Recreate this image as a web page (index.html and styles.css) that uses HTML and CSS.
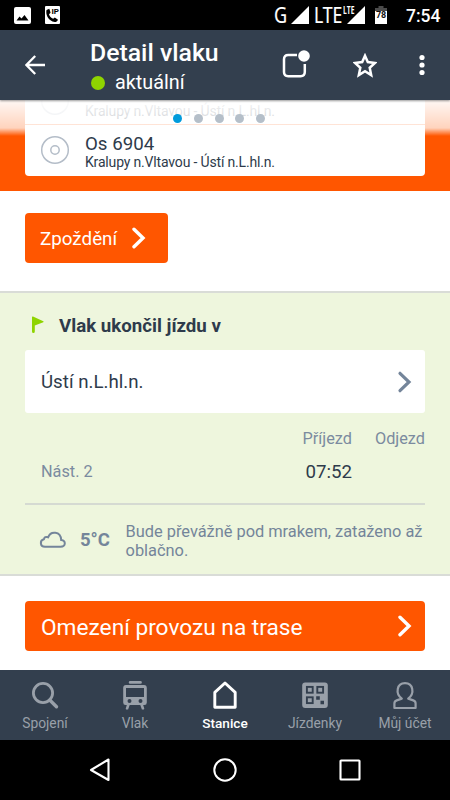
FILE: index.html
```html
<!DOCTYPE html>
<html lang="cs">
<head>
<meta charset="utf-8">
<meta name="viewport" content="width=device-width, initial-scale=1">
<title>Detail vlaku</title>
<link rel="stylesheet" href="styles.css">
</head>
<body>
<div class="screen">
  <div class="status">
    <svg class="status-image" width="17" height="17" viewBox="0 0 17 17"><rect width="17" height="17" rx="2" fill="#fff"/><path d="M2.5 13.5L5.5 9.5L7.5 11.5L10.5 8L14.5 13.5Z"/></svg>
    <span class="ip-icon">
      <svg width="15" height="18" viewBox="0 0 15 18"><rect width="15" height="18" rx="1" fill="#fff"/><path d="M1.5 4L4.3 2.8L5.6 6.8L4 8.2C4.6 10.5 6 12 8.2 12.8L9.8 11.5L13 13.7C12 16 10 16.5 7.5 15.5C3 13.5 .5 8.5 1.5 4Z"/></svg>
      <b>IP</b>
    </span>
    <span class="spacer"></span>
    <span class="net net-g">G</span>
    <svg class="signal" width="18" height="18" viewBox="0 0 18 18"><path d="M18 0V18H0Z" fill="#fff"/></svg>
    <span class="net net-lte">LTE</span>
    <span class="lte-signal"><svg width="18" height="18" viewBox="0 0 18 18"><path d="M18 0V18H0Z" fill="#fff"/></svg><b>LTE</b></span>
    <span class="battery"><svg width="12" height="18" viewBox="0 0 12 18"><path d="M3.5 0H8.5V2H12V5H0V2H3.5Z" fill="#4b4b4b"/><path d="M0 5H12V18H0Z" fill="#fff"/></svg><b>78</b></span>
    <span class="clock">7:54</span>
  </div>

  <header class="appbar">
    <svg class="back" width="20" height="20" viewBox="0 0 20 20" fill="none" stroke="#fff" stroke-width="2.3"><path d="M20 10H1.6M10.2 1L1.4 10L10.2 19"/></svg>
    <div class="titles">
      <h1>Detail vlaku</h1>
      <div class="state"><i></i>aktuální</div>
    </div>
    <svg class="notify" width="28" height="28" viewBox="0 0 28 28"><path d="M15 5H6.2Q2 5 2 9.2V22Q2 26.2 6.2 26.2H18.6Q22.8 26.2 22.8 22V14" fill="none" stroke="#fff" stroke-width="2.5"/><circle cx="22" cy="6" r="5.8" fill="#fff"/></svg>
    <svg class="star" width="24" height="25" viewBox="0 0 24 25"><path d="M12 2.7L14.8 9L22 9.9L16.7 14.7L18.2 22.1L12 18.3L5.8 22.1L7.3 14.7L2 9.9L9.2 9Z" fill="none" stroke="#fff" stroke-width="2.5"/></svg>
    <svg class="more" width="6" height="22" viewBox="0 0 6 22" fill="#fff"><circle cx="3" cy="3.5" r="2.6"/><circle cx="3" cy="11" r="2.6"/><circle cx="3" cy="18.5" r="2.6"/></svg>
  </header>

  <main>
    <section class="hero">
      <div class="trains">
        <div class="train train-prev">
          <svg width="30" height="30" viewBox="0 0 30 30" fill="none" stroke="#b4bdc8" stroke-width="1.5"><circle cx="15" cy="15" r="13.3"/></svg>
          <div class="route">Kralupy n.Vltavou - Ústí n.L.hl.n.</div>
        </div>
        <div class="train">
          <svg width="30" height="30" viewBox="0 0 30 30" fill="none" stroke="#b4bdc8" stroke-width="1.5"><circle cx="15" cy="15" r="13.3"/><circle cx="15" cy="15" r="4.2"/></svg>
          <div><div class="number">Os 6904</div><div class="route">Kralupy n.Vltavou - Ústí n.L.hl.n.</div></div>
        </div>
      </div>
      <div class="fade"></div>
      <div class="dots"><i class="on"></i><i></i><i></i><i></i><i></i></div>
    </section>

    <section class="delay">
      <a class="button delay-button"><span>Zpoždění</span><svg width="16" height="22" viewBox="0 0 16 22"><path d="M3 2.3L12 11L3 19.7" fill="none" stroke="#fff" stroke-width="3.4" stroke-linecap="round"/></svg></a>
    </section>

    <section class="station">
      <h2><svg width="12" height="18" viewBox="0 0 12 18" fill="#8fd400"><path d="M0 1.3Q0 .2 1 .6L11.3 5.3Q12 5.8 11.3 6.2L2.8 9.5V15.5Q2.8 17 1.4 17T0 15.5Z"/></svg>Vlak ukončil jízdu v</h2>
      <a class="place"><span>Ústí n.L.hl.n.</span><svg width="16" height="22" viewBox="0 0 16 22"><path d="M3 2.3L12 11L3 19.7" fill="none" stroke="#74859a" stroke-width="3.2" stroke-linecap="round"/></svg></a>
      <div class="times">
        <span></span><span class="label">Příjezd</span><span class="label">Odjezd</span>
        <span class="platform">Nást. 2</span><span class="time">07:52</span><span></span>
      </div>
      <div class="weather">
        <svg width="28" height="18" viewBox="0 0 28 18"><path d="M6 15.8H21.5C27.2 15.6 27 9.6 22.2 9C21.7 -.2 11.4 -.2 9.2 6.2C6.6 5.3 5.4 6.5 4.9 8.2C.6 9.2 .8 15.7 6 15.8Z" fill="none" stroke="#74859a" stroke-width="2"/></svg>
        <b>5°C</b>
        <p>Bude převážně pod mrakem, zataženo až oblačno.</p>
      </div>
    </section>

    <section class="limits">
      <a class="button limits-button"><span>Omezení provozu na trase</span><svg width="16" height="22" viewBox="0 0 16 22"><path d="M3 2.3L12 11L3 19.7" fill="none" stroke="#fff" stroke-width="3.4" stroke-linecap="round"/></svg></a>
    </section>
  </main>

  <nav class="tabs">
    <a><svg width="30" height="30" viewBox="0 0 30 30" fill="none" stroke="#99a0a9"><circle cx="13" cy="13" r="9.6" stroke-width="2.8"/><path d="M19.7 20L26.5 26.8" stroke-width="3.4" stroke-linecap="round"/></svg><span>Spojení</span></a>
    <a><svg width="30" height="30" viewBox="0 0 30 30" fill="#99a0a9"><rect x="8.8" y="1" width="13" height="2.7" rx="1.3"/><path fill-rule="evenodd" d="M6 5H24Q26.8 5 26.8 8V22.5Q26.8 25 24.4 25H23.2L24.3 28.7Q24 29.8 22.6 29.5H21.9L20.3 25H9.7L8.1 29.5H7.4Q6 29.8 5.7 28.7L6.8 25H5.6Q3.2 25 3.2 22.5V8Q3.2 5 6 5ZM6 8V17H24V8ZM9.5 19A2 2 0 1 0 9.5 23A2 2 0 1 0 9.5 19ZM20.5 19A2 2 0 1 0 20.5 23A2 2 0 1 0 20.5 19Z"/></svg><span>Vlak</span></a>
    <a class="active"><svg width="30" height="30" viewBox="0 0 30 30" fill="none" stroke="#fff" stroke-width="2.9" stroke-linejoin="round"><path d="M15 3L25.2 12.4V27.2H4.8V12.4Z"/></svg><span>Stanice</span></a>
    <a><svg width="30" height="30" viewBox="0 0 30 30"><rect x="2.2" y="2.4" width="25.6" height="25.6" rx="3" fill="#99a0a9"/><g fill="none" stroke="#333f4e" stroke-width="1.9"><rect x="6.9" y="6.9" width="5.8" height="5.8"/><rect x="17.3" y="6.9" width="5.8" height="5.8"/><rect x="6.9" y="17.3" width="5.8" height="5.8"/></g><path d="M16.2 16.2H19.8V19.8H16.2ZM20.5 20.7H24V24.2H20.5Z" fill="#333f4e"/></svg><span>Jízdenky</span></a>
    <a><svg width="30" height="30" viewBox="0 0 30 30" fill="none" stroke="#99a0a9" stroke-width="2.2" stroke-linejoin="round"><path d="M11.8 18.6C5 13.5 6.8 3.2 15 3.2S25 13.5 18.2 18.6L23.3 20.4Q25.6 21.2 25.6 23.5V28H4.4V23.5Q4.4 21.2 6.7 20.4Z"/></svg><span>Můj účet</span></a>
  </nav>

  <div class="sysnav">
    <svg width="24" height="26" viewBox="0 0 24 26"><path d="M20.5 2.5V23L3 13Z" fill="none" stroke="#fff" stroke-width="2.1" stroke-linejoin="round"/></svg>
    <svg width="26" height="26" viewBox="0 0 26 26"><circle cx="13" cy="13" r="10.7" fill="none" stroke="#fff" stroke-width="2"/></svg>
    <svg width="26" height="26" viewBox="0 0 26 26"><rect x="3.5" y="3.5" width="19" height="19" rx=".6" fill="none" stroke="#fff" stroke-width="2.1"/></svg>
  </div>
</div>
</body>
</html>
```

FILE: styles.css
```css
* { box-sizing: border-box; }
body { margin: 0; font-family: Roboto, "Liberation Sans", sans-serif; color: #2e3b4b; background: #000; }
h1, h2, p { margin: 0; }
svg { display: block; flex: none; }
.screen { width: 450px; height: 800px; display: flex; flex-direction: column; overflow: hidden; }

.status { height: 30px; flex: none; display: flex; align-items: center; padding: 0 10px 0 14px; background: #000; color: #fff; white-space: nowrap; }
.ip-icon, .lte-signal, .battery { position: relative; flex: none; }
.ip-icon { margin-left: 14px; }
.ip-icon b { position: absolute; right: 1px; top: 2px; color: #000; font-size: 8px; line-height: 8px; }
.spacer { flex: 1; }
.net { font-family: "Noto Sans", sans-serif; font-size: 22.5px; line-height: 30px; padding-bottom: 1px; -webkit-text-stroke: .2px #fff; }
.net-g { width: 17px; transform: scaleX(.8); transform-origin: left; }
.net-lte { width: 28px; margin-left: 5px; transform: scaleX(.78); transform-origin: left; }
.lte-signal { margin-left: 5px; }
.lte-signal b { position: absolute; left: -4px; top: -1px; font: 700 10.5px/10px "Open Sans", sans-serif; transform: scaleX(.64); transform-origin: left; }
.battery { margin-left: 10px; }
.battery b { position: absolute; left: 1px; top: 5px; color: #111; font-size: 9px; line-height: 9px; letter-spacing: -.2px; }
.clock { width: 34px; margin-left: 19px; padding-top: 1px; font-size: 17.5px; font-weight: 500; line-height: 30px; }

.appbar { height: 70px; flex: none; display: flex; align-items: center; padding: 0 24px 0 25px; background: #333f4e; color: #fff; position: relative; z-index: 1; box-shadow: 0 1px 2px rgba(0,0,0,.4); }
.titles { flex: 1; margin-left: 45px; padding-top: 6px; }
.titles h1 { font-size: 24.8px; line-height: 30px; font-weight: 500; }
.state { display: flex; align-items: center; font-size: 19.8px; line-height: 30px; }
.state i { width: 14px; height: 14px; margin: 0 10px 0 1px; border-radius: 50%; background: #8fd400; }
.notify { margin-right: 43px; margin-top: -3px; }
.star { margin-right: 42px; }
.more { margin-right: 1px; }

main { height: 570px; flex: none; overflow: hidden; background: #fff; }
.hero { position: relative; height: 91px; padding: 0 25px; background: #ff5600; overflow: hidden; }
.trains { height: 75.5px; background: #fff; border-radius: 0 0 4px 4px; overflow: hidden; display: flex; flex-direction: column; justify-content: flex-end; }
.train { height: 51px; flex: none; display: flex; align-items: center; gap: 15px; padding-left: 15px; }
.train-prev { border-bottom: 1px solid #ff8a50; align-items: flex-end; padding-bottom: 5px; }
.train-prev svg { margin-bottom: 3px; }
.number { font-size: 18.7px; line-height: 20px; padding-top: 3px; }
.route { font-size: 14px; line-height: 16px; letter-spacing: -.17px; white-space: nowrap; }
.fade { position: absolute; left: 0; right: 0; top: 0; height: 36px; background: linear-gradient(rgba(255,255,255,.96), rgba(255,255,255,.74) 28px, rgba(255,255,255,0)); }
.dots { position: absolute; top: 14px; left: 0; right: 12px; display: flex; justify-content: center; gap: 11.6px; }
.dots i { width: 9px; height: 9px; border-radius: 50%; background: #b5bfc9; }
.dots .on { background: #009bdc; }

.button { display: flex; align-items: center; background: #ff5600; color: #fff; border-radius: 4px; white-space: nowrap; }
.delay { height: 100px; padding: 22px 25px 0; }
.delay-button { width: 142.5px; height: 50px; padding: 0 15px; justify-content: space-between; font-size: 18.8px; }
.delay-button svg { margin-right: 6px; }
.delay-button span { padding-top: 1px; }

.station { height: 285px; padding: 0 25px; background: #eef6dd; border-top: 2px solid #d9dcd7; border-bottom: 2px solid #d9dcd7; }
.station h2 { height: 57px; padding: 8px 0 0 7px; display: flex; align-items: center; gap: 15px; font-size: 18.7px; font-weight: 700; }
.station h2 svg { margin-top: -2px; }
.place { height: 62.5px; padding: 1px 12px 0 16px; display: flex; align-items: center; justify-content: space-between; background: #fff; border-radius: 3px; font-size: 18.7px; }
.times { display: grid; grid-template-columns: 1fr 75px 73px; grid-template-rows: 31px 35px; align-items: center; text-align: right; padding-top: 10.5px; height: 92.5px; border-bottom: 2px solid #d5dad2; align-content: start; }
.label { font-size: 16.3px; color: #7b8b9f; }
.platform { text-align: left; padding-left: 16px; font-size: 16.3px; color: #7b8b9f; }
.time { font-size: 18.7px; }
.weather { height: 69px; padding: 3px 0 0 14px; display: flex; align-items: center; color: #74859a; }
.weather svg { margin-top: -3px; }
.weather b { width: 46px; margin: -2px 0 0 13px; font-size: 18.5px; }
.weather p { width: 302px; font-size: 16.4px; line-height: 19px; letter-spacing: -.02px; }

.limits { height: 94px; padding: 25px 25px 0; }
.limits-button { height: 50px; padding: 2px 12px 0 16px; justify-content: space-between; font-size: 22.7px; }
.limits-button svg { margin-top: -2px; }

.tabs { height: 70px; flex: none; display: grid; grid-template-columns: repeat(5, 90px); background: #333f4e; color: #99a0a9; font-size: 13.8px; }
.tabs a { display: flex; flex-direction: column; align-items: center; padding-top: 10px; }
.tabs span { line-height: 18px; margin-top: 4px; }
.tabs .active { color: #fff; font-weight: 500; font-size: 13.6px; }
.sysnav { height: 60px; flex: none; display: grid; grid-template-columns: 125px 125px 125px; justify-content: center; justify-items: center; align-items: center; background: #000; }
```
